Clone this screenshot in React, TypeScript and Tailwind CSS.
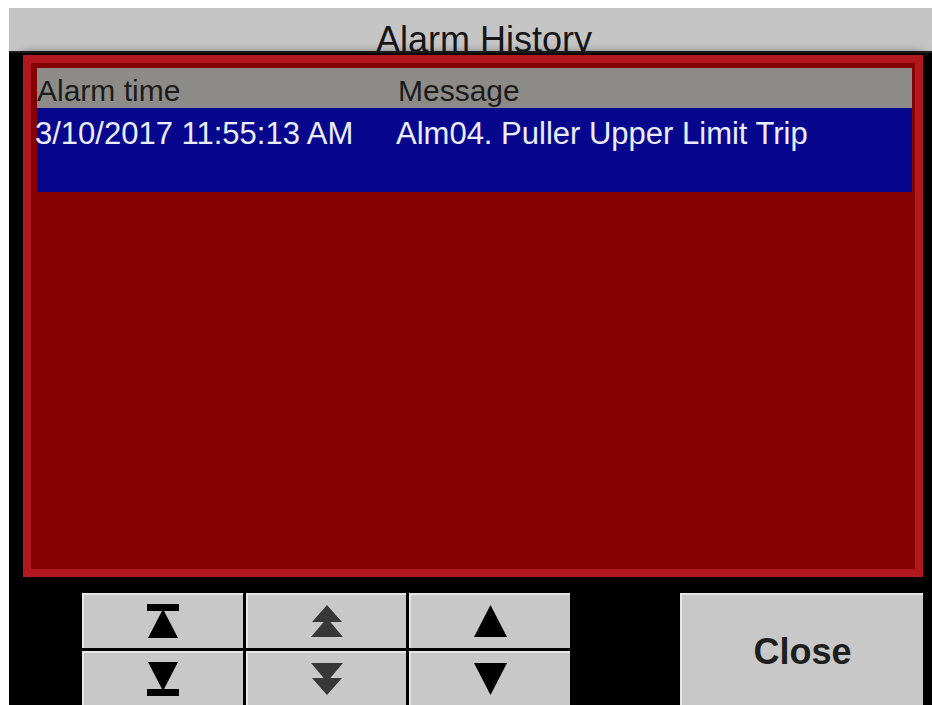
import React from "react";

const FONT = { fontFamily: '"Liberation Sans", Arial, sans-serif' };

function TopIcon() {
  return (
    <svg width="32" height="34" viewBox="0 0 32 34">
      <rect x="0" y="0" width="32" height="7" fill="#000" />
      <polygon points="16,5 1,34 31,34" fill="#000" />
    </svg>
  );
}

function BottomIcon() {
  return (
    <svg width="32" height="34" viewBox="0 0 32 34">
      <polygon points="1,0 31,0 16,29" fill="#000" />
      <rect x="0" y="27" width="32" height="7" fill="#000" />
    </svg>
  );
}

function PageUpIcon() {
  return (
    <svg width="34" height="32" viewBox="0 0 34 32">
      <polygon points="17,0 2,17 32,17" fill="#383838" />
      <polygon points="17,13 1,32 33,32" fill="#383838" />
    </svg>
  );
}

function PageDownIcon() {
  return (
    <svg width="34" height="32" viewBox="0 0 34 32">
      <polygon points="1,0 33,0 17,19" fill="#383838" />
      <polygon points="2,15 32,15 17,32" fill="#383838" />
    </svg>
  );
}

function UpIcon() {
  return (
    <svg width="33" height="32" viewBox="0 0 33 32">
      <polygon points="16.5,0 0,32 33,32" fill="#000" />
    </svg>
  );
}

function DownIcon() {
  return (
    <svg width="33" height="32" viewBox="0 0 33 32">
      <polygon points="0,0 33,0 16.5,32" fill="#000" />
    </svg>
  );
}

function NavButton({ children }: { children: React.ReactNode }) {
  return (
    <button className="flex items-center justify-center bg-[#c8c8c8] border-t-2 border-l-2 border-[#e6e6e6]">
      {children}
    </button>
  );
}

export default function App() {
  return (
    <div className="w-[932px] h-[705px] bg-white pl-[9px] pt-[8px] overflow-hidden" style={FONT}>
      <div className="flex flex-col h-full bg-black">
        {/* title bar */}
        <div className="h-[45px] shrink-0 bg-[#c5c5c5] border-b-2 border-[#202020] overflow-hidden pl-[27px] pt-[14px] text-center">
          <span className="text-[36px] leading-[36px] text-[#161616]">Alarm History</span>
        </div>

        {/* alarm list panel */}
        <div className="mt-[2px] ml-[14px] mr-[9px] h-[522px] shrink-0 border-[8px] border-[#b0181e] bg-[#850000] pl-[6px] pt-[5px] pr-[3px] shadow-[0_0_10px_rgba(0,0,0,0.8)]">
          <div className="h-[40px] bg-[#8c8b87] flex text-[30px] leading-[30px] text-[#1c1c1c] pt-[8px]">
            <div className="w-[361px]">Alarm time</div>
            <div>Message</div>
          </div>
          <div className="h-[84px] bg-[#07078e] flex text-[31px] leading-[31px] text-[#ececff] pt-[10px]">
            <div className="w-[361px] -ml-[2px] pr-[2px]">3/10/2017 11:55:13 AM</div>
            <div>Alm04. Puller Upper Limit Trip</div>
          </div>
        </div>

        {/* navigation and close buttons */}
        <div className="flex mt-[16px] flex-1">
          <div className="ml-[73px] w-[488px] grid grid-cols-3 grid-rows-2 gap-[3px]">
            <NavButton>
              <TopIcon />
            </NavButton>
            <NavButton>
              <PageUpIcon />
            </NavButton>
            <NavButton>
              <UpIcon />
            </NavButton>
            <NavButton>
              <BottomIcon />
            </NavButton>
            <NavButton>
              <PageDownIcon />
            </NavButton>
            <NavButton>
              <DownIcon />
            </NavButton>
          </div>
          <button className="ml-[110px] w-[243px] bg-[#c8c8c8] border-t-2 border-l-2 border-[#e6e6e6] flex items-center justify-center pt-[4px]">
            <span className="text-[36px] font-bold text-[#1e1e1e]">Close</span>
          </button>
        </div>
      </div>
    </div>
  );
}
